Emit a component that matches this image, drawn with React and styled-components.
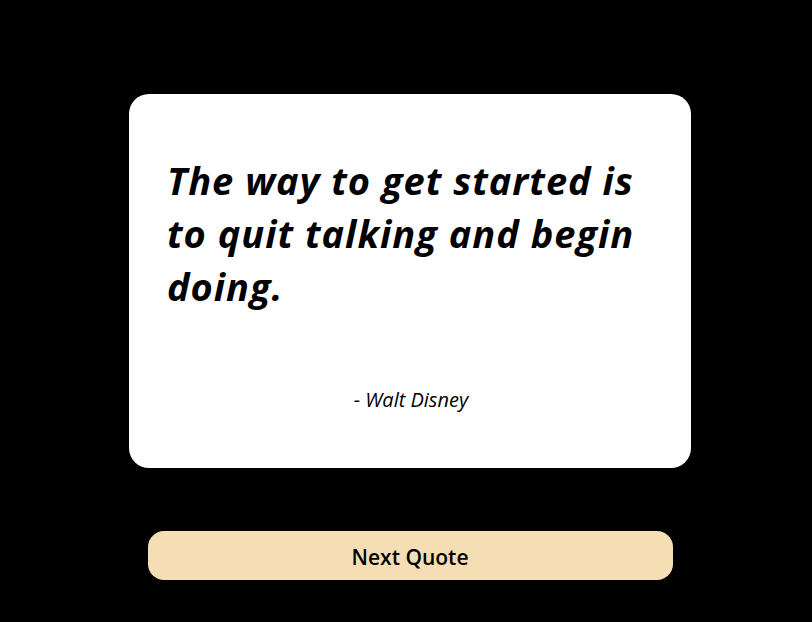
import React from "react";
import styled, { createGlobalStyle } from "styled-components";

const Global = createGlobalStyle`
  html, body { margin: 0; padding: 0; background: #000; }
  body { font-family: "Open Sans", "Noto Sans", sans-serif; }
`;

const Page = styled.main`
  display: flex;
  flex-direction: column;
  align-items: center;
  padding: 94px 0 0 8px;
  min-height: 622px;
  box-sizing: border-box;
`;

const Card = styled.section`
  width: 562px;
  height: 374px;
  box-sizing: border-box;
  background: #fff;
  border-radius: 20px;
  padding: 60px 42px 0 38px;
  display: flex;
  flex-direction: column;
`;

const Quote = styled.h1`
  margin: 0;
  font-size: 38px;
  line-height: 53px;
  font-weight: 700;
  font-style: italic;
  color: #000;
  letter-spacing: 1px;
`;

const Author = styled.p`
  margin: 74px 0 0;
  padding-left: 6px;
  text-align: center;
  font-size: 20px;
  line-height: 26px;
  font-style: italic;
  color: #000;
`;

const Button = styled.button`
  margin-top: 63px;
  width: 525px;
  height: 49px;
  border: none;
  border-radius: 16px;
  background: #f5deb3;
  color: #000;
  font-family: "Open Sans", "Noto Sans", sans-serif;
  font-size: 21px;
  font-weight: 600;
  padding-top: 3px;
  cursor: pointer;
`;

export default function App() {
  return (
    <>
      <Global />
      <Page>
        <Card>
          <Quote>The way to get started is to quit talking and begin doing.</Quote>
          <Author>- Walt Disney</Author>
        </Card>
        <Button>Next Quote</Button>
      </Page>
    </>
  );
}
